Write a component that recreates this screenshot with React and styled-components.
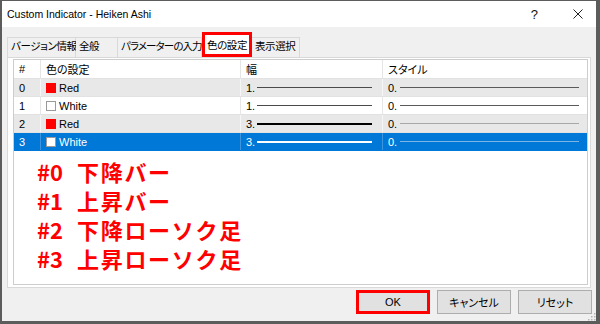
import React from "react";
import styled, { createGlobalStyle } from "styled-components";

const GlobalStyle = createGlobalStyle`
  html, body {
    margin: 0;
    padding: 0;
  }
  body {
    width: 600px;
    height: 324px;
    overflow: hidden;
    font-family: "Liberation Sans", "Noto Sans CJK JP", sans-serif;
    font-size: 11px;
    color: #000;
    font-feature-settings: "palt";
  }
`;

const Frame = styled.div`
  width: 600px;
  height: 324px;
  box-sizing: border-box;
  background: #5c5c5c;
  padding: 1px 4px 3px 2px;
  display: flex;
`;

const Dialog = styled.div`
  position: relative;
  flex: 1;
  display: flex;
  flex-direction: column;
  background: #f0f0f0;
`;

const TitleBar = styled.div`
  height: 26px;
  flex-shrink: 0;
  display: flex;
  align-items: center;
  background: #fff;
  padding: 0 13px 0 5px;
`;

const Title = styled.span`
  font-size: 10.5px;
  color: #000;
`;

const Help = styled.span`
  margin-left: auto;
  margin-right: 35px;
  font-size: 13px;
  color: #111;
`;

const CloseIcon = () => (
  <svg width="10" height="10" viewBox="0 0 10 10">
    <path d="M0.5 0.5L9.5 9.5M9.5 0.5L0.5 9.5" stroke="#222" strokeWidth="1" fill="none" />
  </svg>
);

const Body = styled.div`
  flex: 1;
  display: flex;
  flex-direction: column;
  padding: 5px 4px 7px 5px;
`;

const TabStrip = styled.div`
  height: 25px;
  flex-shrink: 0;
  display: flex;
  align-items: flex-end;
`;

const Tab = styled.div`
  width: ${(p) => p.$w}px;
  box-sizing: border-box;
  display: flex;
  align-items: center;
  white-space: nowrap;
  font-size: 10.5px;
  letter-spacing: ${(p) => p.$ls ?? -0.4}px;
  ${(p) =>
    p.$active
      ? `
    height: 25px;
    border: 3px solid #ff0000;
    background: #fff;
    padding-left: 2px;
    position: relative;
    z-index: 1;
  `
      : `
    height: 20px;
    border: 1px solid #d9d9d9;
    border-bottom: none;
    border-left: ${p.$first ? "1px solid #d9d9d9" : "none"};
    background: #f0f0f0;
    padding: 0 0 4px 3px;
  `}
`;

const Panel = styled.div`
  flex: 1;
  display: flex;
  flex-direction: column;
  background: #fff;
  border: 1px solid #d9d9d9;
  margin-right: 1px;
  padding: 1px 2px 2px 5px;
`;

const List = styled.div`
  flex: 1;
  display: flex;
  flex-direction: column;
  border: 1px solid #cdcdcd;
  background: #fff;
`;

const Row = styled.div`
  display: grid;
  grid-template-columns: 27px 200px 142px 1fr;
  height: ${(p) => (p.$head ? 19 : 18)}px;
  box-sizing: border-box;
  background: ${(p) => p.$bg};
  color: ${(p) => (p.$selected ? "#fff" : "#000")};
  border-bottom: 1px solid ${(p) => (p.$selected ? "#0078d7" : "#e2e2e2")};
`;

const Cell = styled.div`
  display: flex;
  align-items: center;
  gap: ${(p) => p.$gap || 0}px;
  padding: 0 ${(p) => p.$pr || 0}px 0 5px;
  border-right: 1px solid ${(p) => p.$line};
  white-space: nowrap;
  overflow: hidden;
`;

const Swatch = styled.span`
  width: 10px;
  height: 10px;
  box-sizing: border-box;
  flex-shrink: 0;
  background: ${(p) => p.$color};
  border: 1px solid ${(p) => (p.$color === "#ff0000" ? "#ff0000" : "#9a9a9a")};
`;

const LineSample = styled.span`
  flex: 1;
  height: ${(p) => p.$h}px;
  background: ${(p) => p.$color};
`;

const Notes = styled.div`
  padding: 6px 0 0 23px;
  font-family: "Noto Sans CJK JP", sans-serif;
  font-size: 22px;
  font-weight: 700;
  line-height: 29px;
  letter-spacing: 1.7px;
  color: #ff0000;
  font-feature-settings: normal;
`;

const NoteLine = styled.div`
  display: flex;
  white-space: nowrap;
`;

const NoteNum = styled.span`
  display: inline-block;
  width: 40px;
  letter-spacing: 0;
`;

const Footer = styled.div`
  display: flex;
  justify-content: flex-end;
  gap: 7px;
  margin-top: 2px;
`;

const Button = styled.div`
  width: 74px;
  height: 24px;
  box-sizing: border-box;
  display: flex;
  align-items: center;
  justify-content: center;
  background: #e1e1e1;
  border: ${(p) => (p.$marked ? "3px solid #ff0000" : "1px solid #adadad")};
  font-size: 11px;
`;

const Grip = styled.svg`
  position: absolute;
  right: 0;
  bottom: 0;
`;

const tabs = [
  { label: "バージョン情報", w: 69, first: true },
  { label: "全般", w: 42 },
  { label: "パラメーターの入力", w: 84, ls: -0.9 },
  { label: "色の設定", w: 50, active: true },
  { label: "表示選択", w: 48 },
];

const rows = [
  { id: 0, color: "#ff0000", name: "Red", width: "1.", wh: 1, wc: "#4a4a4a", sc: "#5a5a5a" },
  { id: 1, color: "#ffffff", name: "White", width: "1.", wh: 1, wc: "#4a4a4a", sc: "#5a5a5a" },
  { id: 2, color: "#ff0000", name: "Red", width: "3.", wh: 2, wc: "#000", sc: "#a8a8a8" },
  { id: 3, color: "#ffffff", name: "White", width: "3.", wh: 2, wc: "#fff", sc: "#7fb4e6", selected: true },
];

const notes = [
  ["#0", "下降バー"],
  ["#1", "上昇バー"],
  ["#2", "下降ローソク足"],
  ["#3", "上昇ローソク足"],
];

const rowBg = (r) => (r.selected ? "#0078d7" : r.id % 2 === 0 ? "#e8e8e8" : "#fff");
const rowLine = (r) => (r.selected ? "#3d95e0" : r.id % 2 === 0 ? "#f6f6f6" : "#e6e6e6");

export default function App() {
  return (
    <>
      <GlobalStyle />
      <Frame>
        <Dialog>
          <TitleBar>
            <Title>Custom Indicator - Heiken Ashi</Title>
            <Help>?</Help>
            <CloseIcon />
          </TitleBar>
          <Body>
            <TabStrip>
              {tabs.map((t) => (
                <Tab key={t.label} $w={t.w} $ls={t.ls} $active={t.active} $first={t.first}>
                  {t.label}
                </Tab>
              ))}
            </TabStrip>
            <Panel>
              <List>
                <Row $head $bg="#fff">
                  <Cell $line="#e5e5e5">#</Cell>
                  <Cell $line="#e5e5e5">色の設定</Cell>
                  <Cell $line="#e5e5e5">幅</Cell>
                  <Cell $line="transparent">スタイル</Cell>
                </Row>
                {rows.map((r) => (
                  <Row key={r.id} $bg={rowBg(r)} $selected={r.selected}>
                    <Cell $line={rowLine(r)}>{r.id}</Cell>
                    <Cell $line={rowLine(r)} $gap={3}>
                      <Swatch $color={r.color} />
                      {r.name}
                    </Cell>
                    <Cell $line={rowLine(r)} $gap={2} $pr={10}>
                      {r.width}
                      <LineSample $h={r.wh} $color={r.wc} />
                    </Cell>
                    <Cell $line="transparent" $gap={3} $pr={7}>
                      0.
                      <LineSample $h={1} $color={r.sc} />
                    </Cell>
                  </Row>
                ))}
                <Notes>
                  {notes.map(([n, text]) => (
                    <NoteLine key={n}>
                      <NoteNum>{n}</NoteNum>
                      {text}
                    </NoteLine>
                  ))}
                </Notes>
              </List>
            </Panel>
            <Footer>
              <Button $marked>OK</Button>
              <Button>キャンセル</Button>
              <Button>リセット</Button>
            </Footer>
          </Body>
          <Grip width="8" height="8" viewBox="0 0 8 8">
            <rect x="6" y="0" width="1.5" height="1.5" fill="#b5b5b5" />
            <rect x="3" y="3" width="1.5" height="1.5" fill="#b5b5b5" />
            <rect x="6" y="3" width="1.5" height="1.5" fill="#b5b5b5" />
            <rect x="0" y="6" width="1.5" height="1.5" fill="#b5b5b5" />
            <rect x="3" y="6" width="1.5" height="1.5" fill="#b5b5b5" />
            <rect x="6" y="6" width="1.5" height="1.5" fill="#b5b5b5" />
          </Grip>
        </Dialog>
      </Frame>
    </>
  );
}
